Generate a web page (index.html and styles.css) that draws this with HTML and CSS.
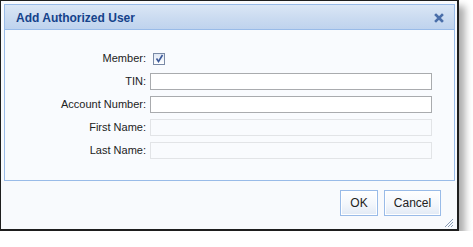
FILE: index.html
```html
<!DOCTYPE html>
<html>
<head>
<meta charset="utf-8">
<link rel="stylesheet" href="styles.css">
</head>
<body>
<div class="window">
  <div class="panel">
    <div class="header">
      <span class="title">Add Authorized User</span>
      <svg class="close" width="10" height="10" viewBox="0 0 10 10"><path d="M2 2 L8 8 M8 2 L2 8" stroke="#4a6ea9" stroke-width="2.6" stroke-linecap="square"/></svg>
    </div>
    <div class="form">
      <label class="lbl">Member:</label>
      <div class="field"><span class="check"><svg width="9" height="9" viewBox="0 0 9 9"><path d="M1.5 4.5 L3.5 7.5 L7.5 1" fill="none" stroke="#3d5a9a" stroke-width="1.6"/></svg></span></div>
      <label class="lbl">TIN:</label>
      <div class="field"><input class="inp" type="text"></div>
      <label class="lbl">Account Number:</label>
      <div class="field"><input class="inp" type="text"></div>
      <label class="lbl">First Name:</label>
      <div class="field"><input class="inp dis" type="text" disabled></div>
      <label class="lbl">Last Name:</label>
      <div class="field"><input class="inp dis" type="text" disabled></div>
    </div>
  </div>
  <div class="footer">
    <button class="btn ok">OK</button>
    <button class="btn cancel">Cancel</button>
  </div>
  <svg class="grip" width="10" height="10" viewBox="0 0 10 10"><path d="M9 1 L1 9 M9 4 L4 9 M9 7 L7 9" stroke="#8a9cb5" stroke-width="1"/></svg>
</div>
</body>
</html>
```

FILE: styles.css
```css
html, body {
  margin: 0;
  padding: 0;
  background: #ffffff;
}
body {
  font-family: "Liberation Sans", Arial, sans-serif;
}
.window {
  position: relative;
  width: 459px;
  height: 231px;
  box-sizing: border-box;
  border: 1px solid #1e1e1e;
  border-right-width: 2px;
  border-bottom-width: 2px;
  background: #f8fafd;
  padding: 3px 2px 2px 3px;
  box-shadow: 6px 6px 7px rgba(0, 0, 0, 0.32);
}
.panel {
  border: 1px solid #99bbe8;
  background: #f9fbfe;
  height: 177px;
  box-sizing: border-box;
  display: flex;
  flex-direction: column;
}
.header {
  height: 25px;
  box-sizing: border-box;
  border-bottom: 1px solid #99bbe8;
  background: linear-gradient(to bottom, #dae6f5 0%, #c9daf0 60%, #bfd3ee 100%);
  display: flex;
  align-items: center;
  justify-content: space-between;
  padding: 0 10px 0 11px;
}
.title {
  font-weight: bold;
  font-size: 12px;
  color: #15428b;
  padding-top: 1px;
}
.close {
  display: block;
  margin-top: 1px;
}
.form {
  display: grid;
  grid-template-columns: 141px 282px;
  column-gap: 4px;
  row-gap: 6px;
  grid-auto-rows: 17px;
  padding-top: 20px;
}
.lbl {
  font-size: 11px;
  color: #222;
  text-align: right;
  line-height: 17px;
}
.field {
  display: flex;
  align-items: center;
}
.check {
  width: 10px;
  height: 10px;
  border: 1px solid #7a8aa6;
  background: linear-gradient(to bottom, #dfe7f4, #ffffff);
  margin-left: 3px;
  display: flex;
  align-items: center;
  justify-content: center;
}
.check svg { display: block; }
.inp {
  width: 282px;
  height: 17px;
  box-sizing: border-box;
  border: 1px solid #a9abae;
  background: #ffffff;
  margin: 0;
  padding: 0 3px;
  font-family: "Liberation Sans", Arial, sans-serif;
  font-size: 11px;
}
.inp.dis {
  border-color: #e2e4e7;
  background: #f9fbfe;
}
.footer {
  display: flex;
  justify-content: flex-end;
  gap: 6px;
  padding: 9px 14px 0 0;
}
.btn {
  height: 26px;
  box-sizing: border-box;
  border: 1px solid #99bbe8;
  box-shadow: inset 0 0 0 1px #ffffff;
  background: linear-gradient(to bottom, #ffffff 0%, #f3f7fc 55%, #e2eaf5 100%);
  font-family: "Liberation Sans", Arial, sans-serif;
  font-size: 12px;
  color: #222;
  padding: 0;
  margin: 0;
}
.btn.ok { width: 38px; }
.btn.cancel { width: 57px; }
.grip {
  position: absolute;
  right: 3px;
  bottom: 1px;
  display: block;
}
```
